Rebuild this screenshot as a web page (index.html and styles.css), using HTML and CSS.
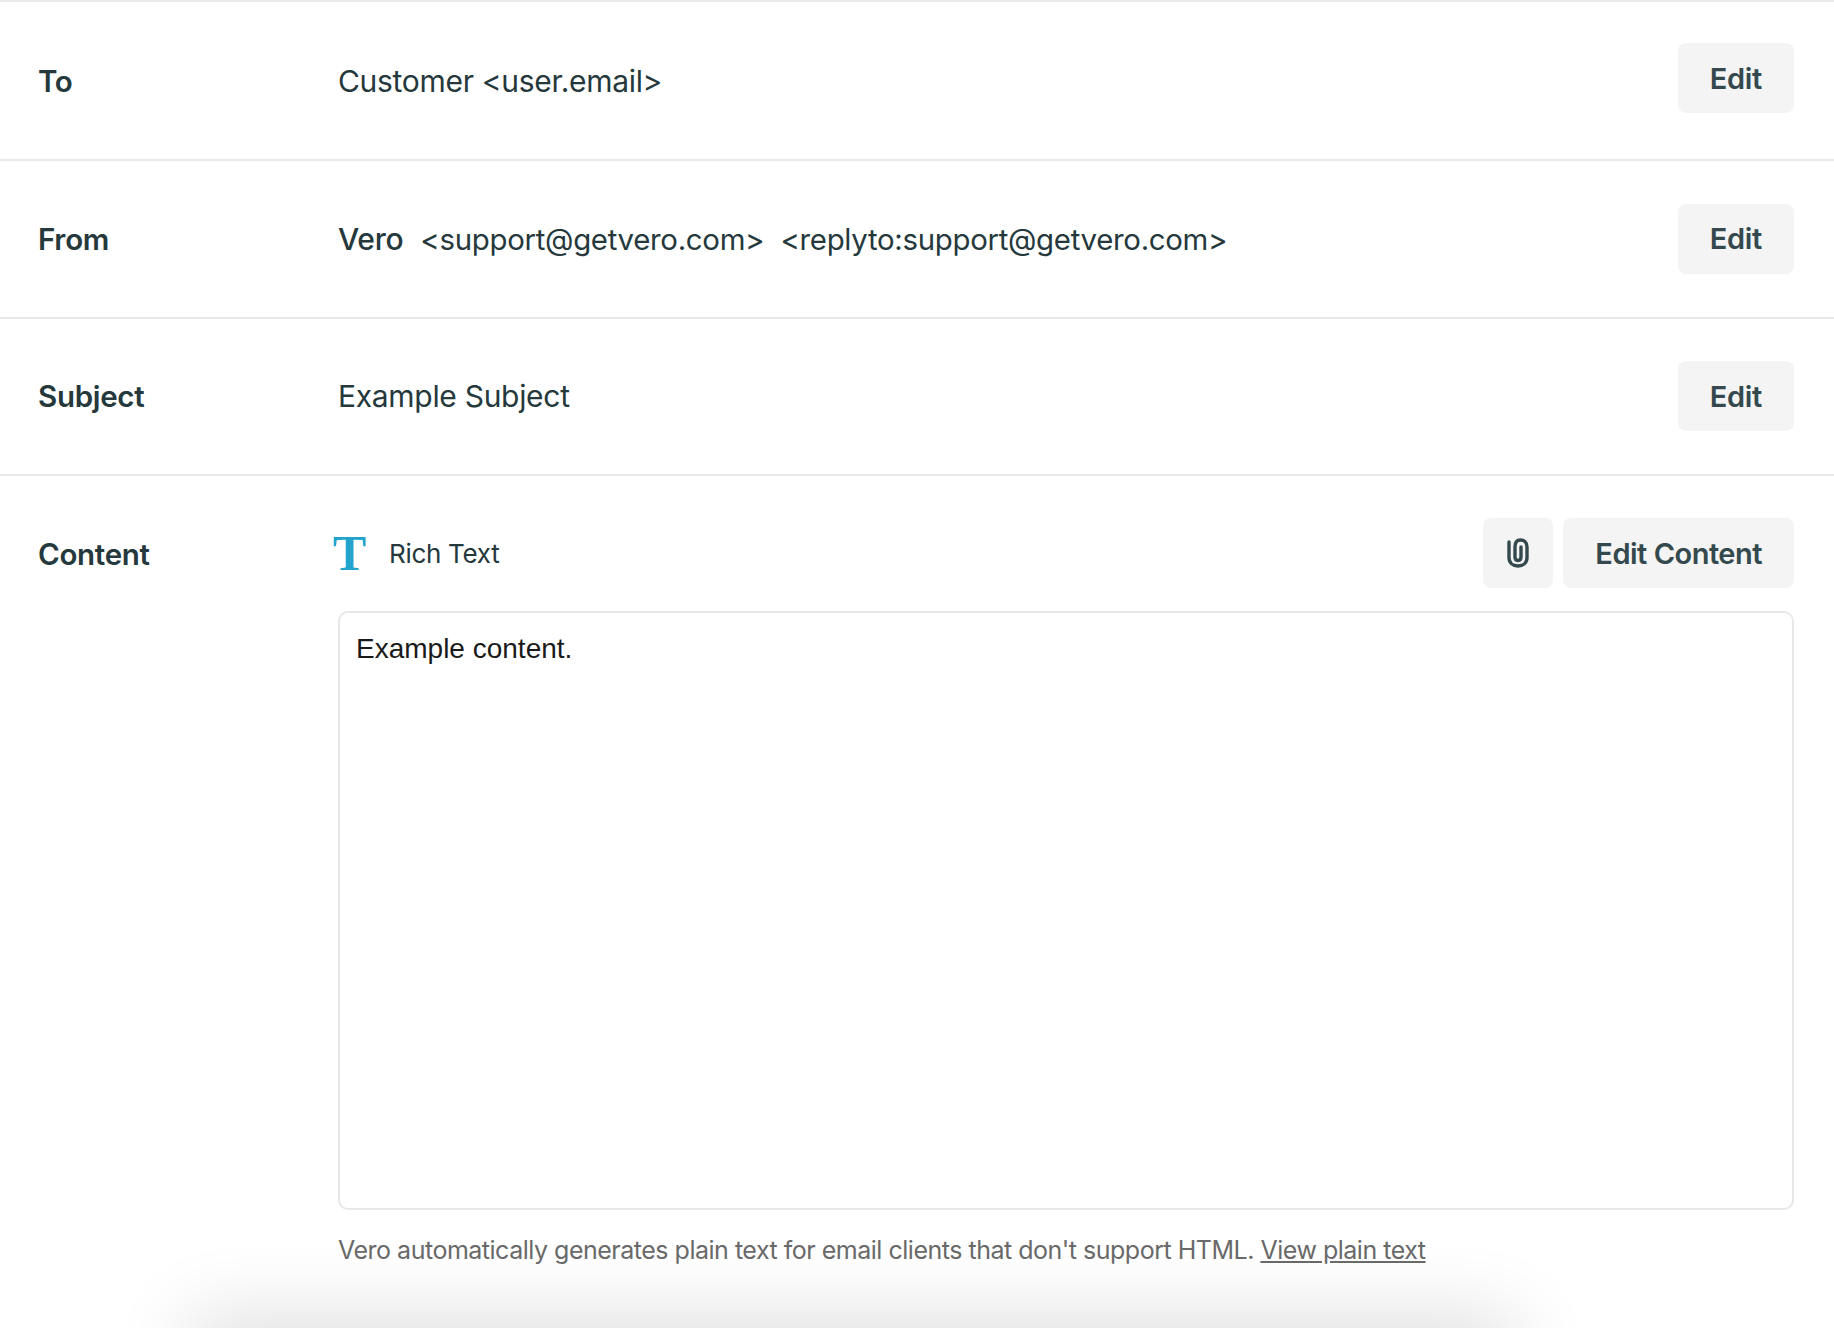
FILE: index.html
```html
<!DOCTYPE html>
<html lang="en">
<head>
    <meta charset="UTF-8">
    <meta name="viewport" content="width=device-width, initial-scale=1.0">
    <title>Email details</title>
    <link rel="stylesheet" href="styles.css">
</head>
<body>
    <main class="details">
        <section class="row row-first">
            <div class="row-label">To</div>
            <div class="row-value">Customer &lt;user.email&gt;</div>
            <button class="btn">Edit</button>
        </section>
        <section class="row">
            <div class="row-label">From</div>
            <div class="row-value">
                <span class="sender">Vero</span>
                <span class="address">&lt;support@getvero.com&gt;</span>
                <span class="address">&lt;replyto:support@getvero.com&gt;</span>
            </div>
            <button class="btn">Edit</button>
        </section>
        <section class="row row-last">
            <div class="row-label">Subject</div>
            <div class="row-value">Example Subject</div>
            <button class="btn">Edit</button>
        </section>
        <section class="content-row">
            <div class="row-label content-label">Content</div>
            <div class="content-body">
                <div class="content-head">
                    <span class="type-icon">T</span>
                    <span class="type-name">Rich Text</span>
                    <button class="btn btn-icon" aria-label="Attach">
                        <svg width="22" height="30" viewBox="0 0 22 30" fill="none" stroke="#34494d" stroke-width="3.4" stroke-linecap="round">
                            <path d="M2 4v15.500c0 5.500 4 8.500 9 8.500s9-3 9-8.500V9c0-4.500-3-7-6.500-7S8 4.500 8 9v10c0 2.500 1.300 3.500 3 3.500s3-1 3-3.500V9"/>
                        </svg>
                    </button>
                    <button class="btn btn-wide">Edit Content</button>
                </div>
                <div class="preview">Example content.</div>
                <p class="note">Vero automatically generates plain text for email clients that don't support HTML. <a href="#">View plain text</a></p>
            </div>
        </section>
    </main>
    <div class="footer-shadow"></div>
</body>
</html>
```

FILE: styles.css
```css
html, body {
    height: 100%;
}
body {
    margin: 0;
    background-color: #fff;
    color: #25383c;
    font-family: Inter, sans-serif;
    font-size: 30px;
    letter-spacing: -0.3px;
    overflow: hidden;
    position: relative;
}
.details {
    border-top: 2px solid #e9e9ec;
}
.row {
    display: flex;
    align-items: center;
    height: 157px;
    padding: 0 40px 0 38px;
    border-bottom: 2px solid #e8e9e9;
    margin-bottom: -1px;
}
.row-first .btn {
    margin-top: -5px;
}
.row-last {
    height: 156px;
}
.row-label {
    width: 300px;
    flex-shrink: 0;
    font-weight: 600;
    font-size: 29.500px;
}
.row-value {
    flex-grow: 1;
}
.sender {
    font-weight: 500;
    margin-right: 9px;
}
.address {
    font-size: 29.400px;
    margin-right: 8px;
}
.btn {
    height: 70px;
    padding: 0 32px;
    border: none;
    border-radius: 8px;
    background-color: #f4f4f4;
    color: #34494d;
    font-family: Inter, sans-serif;
    font-size: 29px;
    letter-spacing: -0.3px;
    font-weight: 600;
}
.btn-wide {
    letter-spacing: -0.500px;
}
.btn-icon {
    width: 70px;
    padding: 0;
    margin-right: 10px;
    display: flex;
    align-items: center;
    justify-content: center;
}
.content-row {
    display: flex;
    padding: 43px 40px 0 38px;
}
.content-label {
    padding-top: 18px;
}
.content-body {
    flex-grow: 1;
}
.content-head {
    display: flex;
    align-items: center;
}
.type-icon {
    width: 56px;
    margin-left: -5px;
    color: #23a4cc;
    font-family: "Liberation Serif", serif;
    font-size: 50px;
    font-weight: 700;
    line-height: 1;
}
.type-name {
    flex-grow: 1;
    font-size: 26px;
}
.preview {
    height: 555px;
    margin-top: 23px;
    padding: 20px 16px;
    border: 2px solid #e8e8e8;
    border-radius: 10px;
    color: #1a1a1a;
    font-family: "Liberation Sans", sans-serif;
    font-size: 28px;
    letter-spacing: 0;
}
.note {
    margin: 25px 0 0;
    color: #6a6a6a;
    font-size: 25px;
    letter-spacing: -0.490px;
}
.note a {
    color: #6a6a6a;
}
.footer-shadow {
    position: absolute;
    left: 200px;
    right: 330px;
    bottom: -60px;
    height: 60px;
    box-shadow: 0 0 80px 10px rgba(0, 0, 0, 0.14);
}
```
